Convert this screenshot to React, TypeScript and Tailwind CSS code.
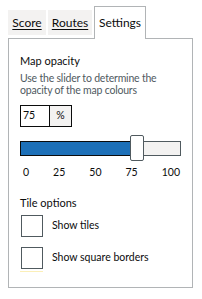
import React from "react";

export default function App() {
  const font = { fontFamily: 'Lato, "Liberation Sans", Arial, sans-serif' };
  return (
    <div className="w-[202px] h-[299px] bg-white text-[#0b0c0c] overflow-hidden" style={font}>
      <div className="flex items-end pl-[8px] h-[38px] gap-[2px] relative z-10">
        <div className="h-[25px] w-[38px] bg-[#f3f2f1] flex items-center justify-center text-[12px] underline underline-offset-2 mb-[3px]">
          Score
        </div>
        <div className="h-[25px] w-[44px] bg-[#f3f2f1] flex items-center justify-center text-[12px] underline underline-offset-2 mb-[3px]">
          Routes
        </div>
        <div className="h-[33px] w-[52px] bg-white border border-b-0 border-[#b1b4b6] flex items-center justify-center text-[12px] mb-[-1px] pb-[1px]">
          Settings
        </div>
      </div>
      <div className="ml-[8px] w-[185px] h-[250px] border border-[#b1b4b6] pl-[11px] pr-[10px] pt-[15px]">
        <div className="text-[11px] leading-[14px]">Map opacity</div>
        <div className="text-[10.5px] leading-[12px] tracking-[-0.2px] text-[#505a5f] mt-[4px]">
          Use the slider to determine the opacity of the map colours
        </div>
        <div className="mt-[9px] flex h-[22px] w-[52px] border border-[#0b0c0c] text-[10.5px]">
          <div className="w-[29px] flex items-center pl-[2px] border-r border-[#0b0c0c]">75</div>
          <div className="flex-1 bg-[#f3f2f1] flex items-center justify-center">%</div>
        </div>
        <div className="relative mt-[8px] w-[161px] h-[26px]">
          <div className="absolute left-0 top-[6px] w-[161px] h-[15px] flex">
            <div className="w-[111px] h-full bg-[#1d70b8] border border-[#0b0c0c]"></div>
            <div className="flex-1 h-full bg-[#f3f2f1] border border-[#505a5f]"></div>
          </div>
          <div className="absolute left-[110px] top-0 w-[14px] h-[26px] bg-white border-[1.5px] border-[#505a5f] rounded-[2px]"></div>
        </div>
        <div className="mt-[5px] flex justify-between pl-[3px] pr-[1px] w-[161px] text-[10.5px] leading-[12px]">
          <span>0</span>
          <span>25</span>
          <span>50</span>
          <span>75</span>
          <span>100</span>
        </div>
        <div className="mt-[18px] text-[11px] leading-[14px]">Tile options</div>
        <div className="mt-[5px] flex items-center gap-[9px]">
          <div className="ml-[1px] w-[22px] h-[22px] border-[1.5px] border-[#505a5f]"></div>
          <span className="text-[10.5px]">Show tiles</span>
        </div>
        <div className="mt-[10px] flex items-center gap-[9px]">
          <div className="ml-[1px] w-[22px] h-[22px] border-[1.5px] border-[#505a5f]"></div>
          <span className="text-[10.5px]">Show square borders</span>
        </div>
        <div className="mt-[2px] h-[1px] w-[23px] bg-[#fbefb8]"></div>
      </div>
    </div>
  );
}
